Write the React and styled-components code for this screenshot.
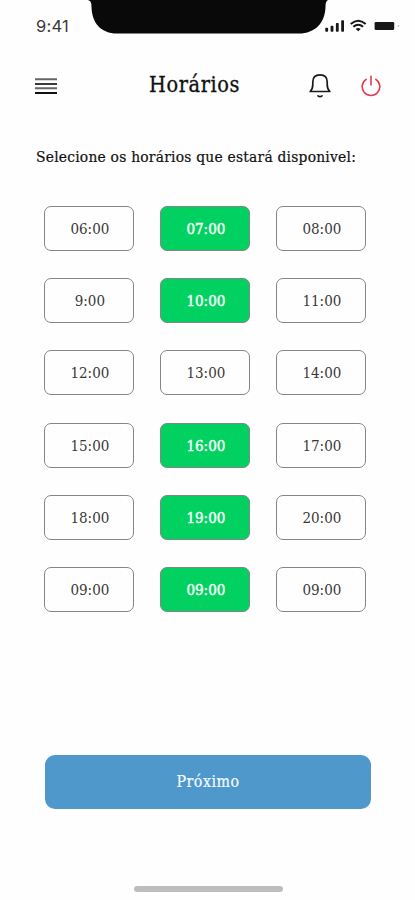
import React, {useState} from 'react';
import styled, {createGlobalStyle} from 'styled-components';

const GlobalStyle = createGlobalStyle`
    *{
        box-sizing: border-box;
    }
    body{
        margin: 0;
        background: #fefefe;
    }
    button{
        padding: 0;
        border: none;
        background: none;
        font-family: inherit;
        cursor: pointer;
    }
    svg{
        display: block;
    }
`;

const Screen = styled.div`
    display: flex;
    flex-direction: column;
    width: 415px;
    height: 900px;
    overflow: hidden;
    background: #fefefe;
    color: #111;
    font-family: "Roboto Slab", "DejaVu Serif Condensed", "DejaVu Serif", serif;
    font-stretch: condensed;
`;

const StatusBar = styled.div`
    display: flex;
    align-items: flex-start;
    height: 60px;
`;

const Clock = styled.span`
    width: 88px;
    padding: 16px 0 0 36px;
    font-family: Inter, "Liberation Sans", sans-serif;
    font-stretch: normal;
    font-size: 16.5px;
    line-height: 20px;
    letter-spacing: 0.2px;
    color: #3a3a3a;
`;

const StatusIcons = styled.div`
    padding-top: 18px;
    margin-left: -3px;
`;

const Header = styled.header`
    display: grid;
    grid-template-columns: 114px 91px 1fr;
    align-items: center;
    height: 52px;
    padding: 0 34px 0 35px;
`;

const Title = styled.h1`
    margin: -3px 0 0;
    font-size: 21.5px;
    font-weight: 400;
    line-height: 30px;
    letter-spacing: 0.6px;
    white-space: nowrap;
    -webkit-text-stroke: 0.3px #111;
`;

const Actions = styled.div`
    display: flex;
    justify-content: flex-end;
    gap: 30px;
`;

const Instruction = styled.p`
    margin: 35px 0 0 36px;
    font-size: 15.4px;
    line-height: 20px;
    letter-spacing: 0.23px;
    white-space: nowrap;
    -webkit-text-stroke: 0.2px #111;
`;

const Slots = styled.div`
    display: grid;
    grid-template-columns: repeat(3, 90px);
    grid-auto-rows: 45px;
    gap: 27.1px 26px;
    margin: 39.3px 0 0 44.4px;
`;

const Slot = styled.button`
    padding: 1px 0 0 1px;
    border: 1px solid #858585;
    border-radius: 7px;
    background: ${({$selected}) => $selected ? '#00d161' : '#fefefe'};
    color: ${({$selected}) => $selected ? '#f1fff5' : '#383838'};
    font-size: 15px;
    font-stretch: condensed;
    line-height: 20px;
    -webkit-text-stroke: ${({$selected}) => $selected ? '0.5px #f1fff5' : '0'};
`;

const NextButton = styled.button`
    width: 326px;
    height: 54px;
    margin: 143.2px 0 0 45px;
    border-radius: 10px;
    background: #4e98cc;
    color: #f4faff;
    font-size: 15.8px;
    font-stretch: condensed;
    letter-spacing: 0.5px;
    -webkit-text-stroke: 0.2px #f4faff;
`;

const HomeIndicator = styled.div`
    width: 149px;
    height: 6px;
    margin: 77px 0 0 133.5px;
    border-radius: 3px;
    background: #bdbdbd;
`;

const times = [
    '06:00', '07:00', '08:00',
    '9:00', '10:00', '11:00',
    '12:00', '13:00', '14:00',
    '15:00', '16:00', '17:00',
    '18:00', '19:00', '20:00',
    '09:00', '09:00', '09:00',
];

function Notch(){
    return (
        <svg width="240" height="34" viewBox="0 0 240 34">
            <path d="M0 0C3 1 3.5 3 3.5 7C4 23 13 33.5 29 33.5H211C227 33.5 237 23 237.5 7C237.5 3 238 1 240 0Z" fill="#090909" />
        </svg>
    )
}

function DeviceStatus(){
    return (
        <svg width="76" height="16" viewBox="0 0 76 16">
            <g fill="#171717">
                <rect x="0.3" y="9.7" width="2.8" height="4" rx="0.8" />
                <rect x="5.6" y="7.8" width="2.8" height="5.9" rx="0.8" />
                <rect x="10.9" y="5" width="2.8" height="8.7" rx="0.8" />
                <rect x="16.2" y="2.2" width="2.8" height="11.5" rx="0.8" />
                <rect x="49.6" y="3.9" width="19.6" height="8.2" rx="1.4" />
                <path d="M30.7 10.9Q33.2 9.2 35.7 10.9L33.2 13.3Z" />
            </g>
            <g fill="none" stroke="#171717" strokeWidth="2">
                <path d="M25.7 6.1Q33.2 -0.7 40.7 6.1" />
                <path d="M28.3 8.8Q33.2 4.6 38.1 8.8" />
            </g>
            <circle cx="73.5" cy="8" r="0.8" fill="#aaa" />
        </svg>
    )
}

function MenuIcon(){
    return (
        <svg width="22" height="18" viewBox="0 0 22 18">
            <path d="M0 2.3H22M0 11.3H22" stroke="#666" strokeWidth="2" />
            <path d="M0 7H22" stroke="#3a3a3a" strokeWidth="2" />
            <path d="M0 16H22" stroke="#111" strokeWidth="2" />
        </svg>
    )
}

function BellIcon(){
    return (
        <svg width="22" height="25" viewBox="0 0 22 25" fill="none" stroke="#191919" strokeWidth="1.7" strokeLinecap="round" strokeLinejoin="round">
            <path d="M1.2 17.5Q3.8 15 3.8 10.5V8C3.8 3.4 6.7 0.9 11 0.9S18.2 3.4 18.2 8V10.5Q18.2 15 20.8 17.5Z" />
            <path d="M9 21.8Q11 23.4 13 21.8" />
        </svg>
    )
}

function PowerIcon(){
    return (
        <svg width="20" height="22" viewBox="0 0 20 22" fill="none" stroke="#dc3f50" strokeWidth="1.6" strokeLinecap="round">
            <path d="M5.2 4.3A8.8 8.8 0 1 0 14.8 4.3" />
            <path d="M10 1.2V10" />
        </svg>
    )
}

export default function App() {
    const [selected, setSelected] = useState([1, 4, 10, 13, 16]);

    function toggleSlot(index){
        setSelected(selected.includes(index) ?
            selected.filter(item => item !== index)
            :
            [...selected, index]
        );
    }

    return (
        <Screen>
            <GlobalStyle />
            <StatusBar>
                <Clock>9:41</Clock>
                <Notch />
                <StatusIcons>
                    <DeviceStatus />
                </StatusIcons>
            </StatusBar>

            <Header>
                <button aria-label="Menu"><MenuIcon /></button>
                <Title>Horários</Title>
                <Actions>
                    <button aria-label="Notificações"><BellIcon /></button>
                    <button aria-label="Sair"><PowerIcon /></button>
                </Actions>
            </Header>

            <Instruction>Selecione os horários que estará disponivel:</Instruction>

            <Slots>
                {
                    times.map((time, index) => (
                        <Slot key={index} $selected={selected.includes(index)} onClick={() => toggleSlot(index)}>
                            {time}
                        </Slot>
                    ))
                }
            </Slots>

            <NextButton>Próximo</NextButton>
            <HomeIndicator />
        </Screen>
    )
}
